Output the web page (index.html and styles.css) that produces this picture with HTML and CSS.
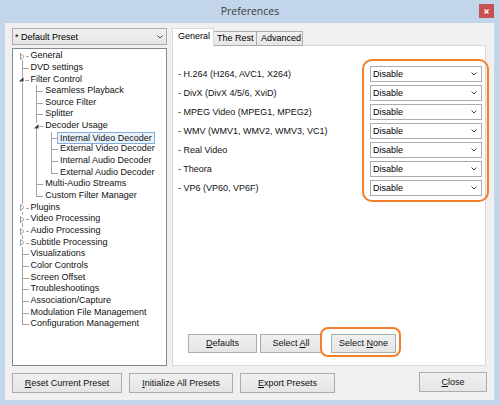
FILE: index.html
```html
<!DOCTYPE html>
<html>
<head>
<meta charset="utf-8">
<title>Preferences</title>
<link rel="stylesheet" href="styles.css">
</head>
<body>
<div class="window">
  <div class="titlebar">
    <span></span>
    <span class="title">Preferences</span>
    <span class="close-btn"><svg width="5" height="5" viewBox="0 0 5 5"><path d="M0.5 0.5 L4.5 4.5 M4.5 0.5 L0.5 4.5" stroke="#fff" stroke-width="1.3"/></svg></span>
  </div>
  <div class="client">
    <div class="left">
      <div class="combo preset">
        <span>* Default Preset</span>
        <svg class="chev" width="6" height="4" viewBox="0 0 6 4"><path d="M0.5 0.5 L3 3 L5.5 0.5" fill="none" stroke="#444" stroke-width="1"/></svg>
      </div>
      <div class="tree-box">
        <ul class="tree">
          <li><span class="row"><i class="exp closed"><svg width="5" height="7" viewBox="0 0 5 7"><path d="M0.5 0.5 L4 3.5 L0.5 6.5 Z" fill="#fff" stroke="#9a9a9a" stroke-width="1"/></svg></i><span class="lbl">General</span></span></li>
          <li><span class="row"><span class="lbl">DVD settings</span></span></li>
          <li><span class="row"><i class="exp open"><svg width="5" height="5" viewBox="0 0 5 5"><path d="M4.5 0 L4.5 4.5 L0 4.5 Z" fill="#333"/></svg></i><span class="lbl">Filter Control</span></span>
            <ul>
              <li><span class="row"><span class="lbl">Seamless Playback</span></span></li>
              <li><span class="row"><span class="lbl">Source Filter</span></span></li>
              <li><span class="row"><span class="lbl">Splitter</span></span></li>
              <li><span class="row"><i class="exp open"><svg width="5" height="5" viewBox="0 0 5 5"><path d="M4.5 0 L4.5 4.5 L0 4.5 Z" fill="#333"/></svg></i><span class="lbl">Decoder Usage</span></span>
                <ul>
                  <li><span class="row sel"><span class="lbl">Internal Video Decoder</span></span></li>
                  <li><span class="row"><span class="lbl">External Video Decoder</span></span></li>
                  <li><span class="row"><span class="lbl">Internal Audio Decoder</span></span></li>
                  <li><span class="row"><span class="lbl">External Audio Decoder</span></span></li>
                </ul>
              </li>
              <li><span class="row"><span class="lbl">Multi-Audio Streams</span></span></li>
              <li><span class="row"><span class="lbl">Custom Filter Manager</span></span></li>
            </ul>
          </li>
          <li><span class="row"><i class="exp closed"><svg width="5" height="7" viewBox="0 0 5 7"><path d="M0.5 0.5 L4 3.5 L0.5 6.5 Z" fill="#fff" stroke="#9a9a9a" stroke-width="1"/></svg></i><span class="lbl">Plugins</span></span></li>
          <li><span class="row"><i class="exp closed"><svg width="5" height="7" viewBox="0 0 5 7"><path d="M0.5 0.5 L4 3.5 L0.5 6.5 Z" fill="#fff" stroke="#9a9a9a" stroke-width="1"/></svg></i><span class="lbl">Video Processing</span></span></li>
          <li><span class="row"><i class="exp closed"><svg width="5" height="7" viewBox="0 0 5 7"><path d="M0.5 0.5 L4 3.5 L0.5 6.5 Z" fill="#fff" stroke="#9a9a9a" stroke-width="1"/></svg></i><span class="lbl">Audio Processing</span></span></li>
          <li><span class="row"><i class="exp closed"><svg width="5" height="7" viewBox="0 0 5 7"><path d="M0.5 0.5 L4 3.5 L0.5 6.5 Z" fill="#fff" stroke="#9a9a9a" stroke-width="1"/></svg></i><span class="lbl">Subtitle Processing</span></span></li>
          <li><span class="row"><span class="lbl">Visualizations</span></span></li>
          <li><span class="row"><span class="lbl">Color Controls</span></span></li>
          <li><span class="row"><span class="lbl">Screen Offset</span></span></li>
          <li><span class="row"><span class="lbl">Troubleshootings</span></span></li>
          <li><span class="row"><span class="lbl">Association/Capture</span></span></li>
          <li><span class="row"><span class="lbl">Modulation File Management</span></span></li>
          <li><span class="row"><span class="lbl">Configuration Management</span></span></li>
        </ul>
      </div>
    </div>

    <div class="right">
      <div class="tabs">
        <span class="tab active">General</span>
        <span class="tab">The Rest</span>
        <span class="tab">Advanced</span>
      </div>
      <div class="tab-panel">
        <div class="codec-list">
          <div class="codec-row"><span class="codec-name">- H.264 (H264, AVC1, X264)</span><div class="combo codec"><span>Disable</span><svg class="chev" width="6" height="4" viewBox="0 0 6 4"><path d="M0.5 0.5 L3 3 L5.5 0.5" fill="none" stroke="#444" stroke-width="1"/></svg></div></div>
          <div class="codec-row"><span class="codec-name">- DivX (DivX 4/5/6, XviD)</span><div class="combo codec"><span>Disable</span><svg class="chev" width="6" height="4" viewBox="0 0 6 4"><path d="M0.5 0.5 L3 3 L5.5 0.5" fill="none" stroke="#444" stroke-width="1"/></svg></div></div>
          <div class="codec-row"><span class="codec-name">- MPEG Video (MPEG1, MPEG2)</span><div class="combo codec"><span>Disable</span><svg class="chev" width="6" height="4" viewBox="0 0 6 4"><path d="M0.5 0.5 L3 3 L5.5 0.5" fill="none" stroke="#444" stroke-width="1"/></svg></div></div>
          <div class="codec-row"><span class="codec-name">- WMV (WMV1, WMV2, WMV3, VC1)</span><div class="combo codec"><span>Disable</span><svg class="chev" width="6" height="4" viewBox="0 0 6 4"><path d="M0.5 0.5 L3 3 L5.5 0.5" fill="none" stroke="#444" stroke-width="1"/></svg></div></div>
          <div class="codec-row"><span class="codec-name">- Real Video</span><div class="combo codec"><span>Disable</span><svg class="chev" width="6" height="4" viewBox="0 0 6 4"><path d="M0.5 0.5 L3 3 L5.5 0.5" fill="none" stroke="#444" stroke-width="1"/></svg></div></div>
          <div class="codec-row"><span class="codec-name">- Theora</span><div class="combo codec"><span>Disable</span><svg class="chev" width="6" height="4" viewBox="0 0 6 4"><path d="M0.5 0.5 L3 3 L5.5 0.5" fill="none" stroke="#444" stroke-width="1"/></svg></div></div>
          <div class="codec-row"><span class="codec-name">- VP6 (VP60, VP6F)</span><div class="combo codec"><span>Disable</span><svg class="chev" width="6" height="4" viewBox="0 0 6 4"><path d="M0.5 0.5 L3 3 L5.5 0.5" fill="none" stroke="#444" stroke-width="1"/></svg></div></div>
        </div>
        <div class="panel-buttons">
          <span class="btn b-defaults"><u>D</u>efaults</span>
          <span class="btn b-all">Select <u>A</u>ll</span>
          <span class="btn b-none">Select <u>N</u>one</span>
        </div>
        <div class="highlight hl-combos"></div>
        <div class="highlight hl-none"></div>
      </div>
    </div>

    <div class="footer">
      <span class="btn b-reset"><u>R</u>eset Current Preset</span>
      <span class="btn b-init"><u>I</u>nitialize All Presets</span>
      <span class="btn b-export"><u>E</u>xport Presets</span>
      <span class="btn b-close"><u>C</u>lose</span>
    </div>
  </div>
</div>
</body>
</html>
```

FILE: styles.css
```css
* { box-sizing: border-box; }
html, body { margin: 0; padding: 0; }
body {
  width: 500px;
  height: 405px;
  overflow: hidden;
  font-family: "Liberation Sans", Arial, sans-serif;
  font-size: 9px;
  color: #000;
  background: #c2d5ea;
}

.window {
  width: 500px;
  height: 405px;
  background: #c2d5ea;
  display: flex;
  flex-direction: column;
  padding: 0 6px 5px 5px;
}

.titlebar {
  height: 23px;
  flex: 0 0 23px;
  display: grid;
  grid-template-columns: 1fr auto 1fr;
  margin: 0 -6px 0 -5px;
}
.title {
  font-family: "Open Sans", "Noto Sans", sans-serif;
  font-size: 10.5px;
  color: #3b3b3b;
  line-height: 23px;
}
.close-btn {
  justify-self: end;
  align-self: start;
  margin: 4px 6px 0 0;
  width: 15px;
  height: 14px;
  background: #c75050;
  display: flex;
  align-items: center;
  justify-content: center;
}
.close-btn svg { display: block; }

.client {
  flex: 1;
  background: #f0f0f0;
  padding: 5px 8px 0 7px;
  display: grid;
  grid-template-columns: 155px 314px;
  grid-template-rows: 338px auto;
  column-gap: 5px;
  row-gap: 6px;
}

/* ---------- left column ---------- */
.left {
  display: flex;
  flex-direction: column;
}
.combo {
  display: flex;
  align-items: center;
  justify-content: space-between;
  border: 1px solid #acacac;
  white-space: nowrap;
}
.combo .chev { display: block; }
.preset {
  height: 17px;
  padding: 0 3px 0 2px;
  background: linear-gradient(#f0f0f0, #e6e6e6);
  margin-bottom: 3px;
}
.tree-box {
  flex: 1;
  background: #fff;
  border: 1px solid #828790;
  overflow: hidden;
}

.tree, .tree ul {
  list-style: none;
  margin: 0;
  padding: 0;
}
.tree { padding: 1.2px 0 0 17.5px; }
.tree ul { padding-left: 14.7px; }
.tree li { position: relative; }
.tree li::before {
  content: "";
  position: absolute;
  left: -9px;
  top: 0;
  bottom: 0;
  border-left: 1px solid #a3a3a3;
}
.tree li:last-child::before { bottom: auto; height: 6px; }
.tree > li:first-child::before { top: 6px; }

.row {
  position: relative;
  display: block;
  height: 11.67px;
  line-height: 11.67px;
  white-space: nowrap;
  color: #111;
}
.row::before {
  content: "";
  position: absolute;
  left: -9px;
  width: 7px;
  top: 6px;
  border-top: 1px solid #a3a3a3;
}
.exp {
  position: absolute;
  z-index: 1;
  background: #fff;
  display: flex;
  align-items: center;
  justify-content: center;
}
.exp svg { display: block; }
.exp.closed { left: -11px; top: 2px; width: 6px; height: 8px; }
.exp.open { left: -12px; top: 3px; width: 6px; height: 6px; }
.row.sel .lbl {
  display: inline-block;
  height: 12px;
  line-height: 10px;
  margin-left: -3px;
  padding: 0 2px;
  border: 1px solid #84acdd;
  background: #e8f2fc;
  vertical-align: top;
}

/* ---------- right column ---------- */
.right {
  display: flex;
  flex-direction: column;
}
.tabs {
  display: flex;
  align-items: flex-end;
  height: 18px;
  flex: 0 0 18px;
  margin-bottom: -1px;
  position: relative;
  z-index: 1;
}
.tab {
  height: 15px;
  line-height: 13px;
  padding: 0 4px;
  border: 1px solid #acacac;
  background: linear-gradient(#f0f0f0, #e6e6e6);
  margin-left: -1px;
  white-space: nowrap;
}
.tab.active {
  height: 18px;
  line-height: 14px;
  width: 42px;
  margin-left: 0;
  padding: 0 5px;
  background: #fff;
  border-color: #d9d9d9;
  border-bottom-color: #fff;
  position: relative;
  z-index: 2;
  margin-right: -1px;
}
.tab:nth-child(2) { width: 45px; }
.tab:nth-child(3) { width: 47px; }

.tab-panel {
  flex: 1;
  position: relative;
  background: #fff;
  border: 1px solid #d9d9d9;
  display: flex;
  flex-direction: column;
  padding: 20px 3px 12px 5px;
}
.codec-list {
  display: flex;
  flex-direction: column;
  gap: 3px;
}
.codec-row {
  display: flex;
  align-items: center;
  justify-content: space-between;
  height: 16px;
}
.codec-name { color: #111; white-space: nowrap; }
.codec {
  width: 112px;
  height: 16px;
  padding: 0 4px 0 2px;
  background: #fff;
}

.panel-buttons {
  margin-top: auto;
  display: flex;
  padding-left: 10px;
}
.btn {
  display: block;
  text-align: center;
  height: 19px;
  line-height: 17px;
  border: 1px solid #acacac;
  background: linear-gradient(#f0f0f0, #e5e5e5);
  white-space: nowrap;
  color: #111;
}
.btn u { text-decoration-thickness: 1px; text-underline-offset: 1px; }
.b-defaults { width: 69px; }
.b-all { width: 62px; margin-left: 3px; }
.b-none { width: 65px; margin-left: 9px; }

.highlight {
  position: absolute;
  border: 2px solid #f57e2a;
  pointer-events: none;
}
.hl-combos { left: 189px; top: 13px; width: 127px; height: 143px; border-radius: 10px; }
.hl-none { left: 147px; top: 281px; width: 81px; height: 30px; border-radius: 8px; }

/* ---------- footer ---------- */
.footer {
  grid-column: 1 / -1;
  display: flex;
  align-items: flex-start;
  gap: 7px;
}
.footer .btn { height: 20px; line-height: 18px; margin-top: 1px; }
.b-reset { width: 110px; }
.b-init { width: 104px; }
.b-export { width: 95px; }
.footer .b-close { width: 68px; margin-left: auto; margin-right: -1px; margin-top: 0; }
```
